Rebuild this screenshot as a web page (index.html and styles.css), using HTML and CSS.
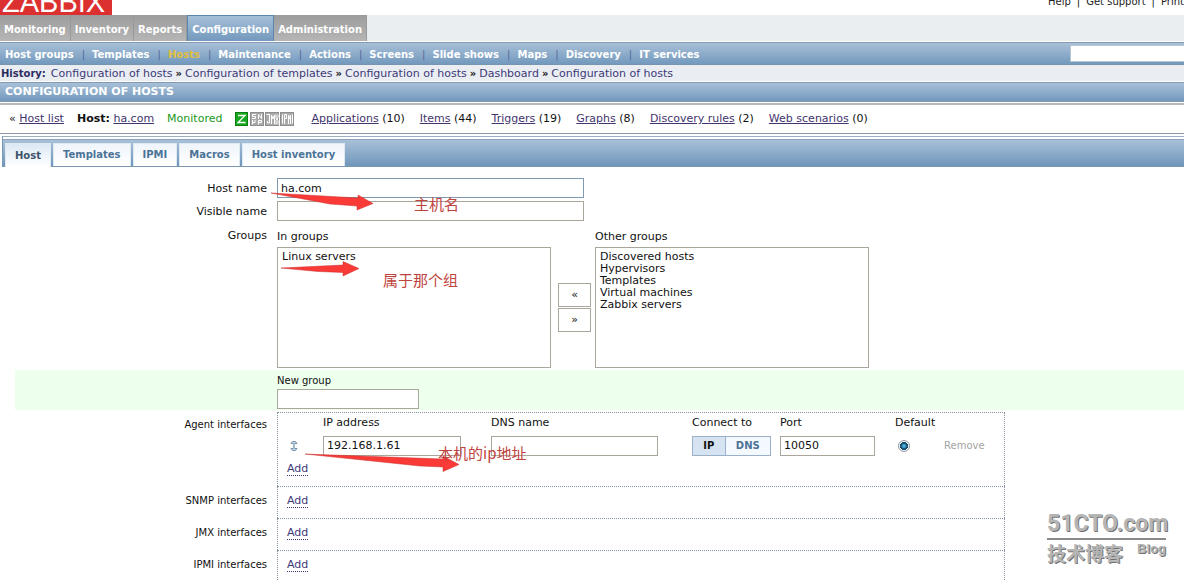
FILE: index.html
```html
<!DOCTYPE html>
<html lang="en">
<head>
<meta charset="utf-8">
<title>Configuration of hosts</title>
<link rel="stylesheet" href="styles.css">
</head>
<body>
<div class="page">
<header class="top">
  <div class="logo">ZABBIX</div>
  <nav class="help"><a href="#">Help</a><span>|</span><a href="#">Get support</a><span>|</span><a href="#">Print</a></nav>
</header>
<nav class="menu">
  <a href="#">Monitoring</a><a href="#">Inventory</a><a href="#">Reports</a><a href="#" class="active">Configuration</a><a href="#">Administration</a>
</nav>
<div class="submenu">
  <nav class="sublinks">
    <a href="#">Host groups</a><a href="#">Templates</a><a href="#" class="current">Hosts</a><a href="#">Maintenance</a><a href="#">Actions</a><a href="#">Screens</a><a href="#">Slide shows</a><a href="#">Maps</a><a href="#">Discovery</a><a href="#">IT services</a>
  </nav>
  <input class="search" type="text" aria-label="Search">
</div>
<nav class="history">
  <b>History:</b><a href="#">Configuration of hosts</a><i>»</i><a href="#">Configuration of templates</a><i>»</i><a href="#">Configuration of hosts</a><i>»</i><a href="#">Dashboard</a><i>»</i><a href="#">Configuration of hosts</a>
</nav>
<h1 class="title">CONFIGURATION OF HOSTS</h1>
<div class="hostbar">
  <span>« <a href="#">Host list</a></span>
  <span><b>Host:</b> <a href="#">ha.com</a></span>
  <span class="monitored">Monitored</span>
  <svg class="status" width="60" height="14" viewBox="0 0 60 14" aria-label="Availability">
    <rect x="0.5" y="0.5" width="12" height="13" fill="#17a81f" stroke="#0b7d12"/>
    <path d="M3 3.5h7L3 10.5h7.500" fill="none" stroke="#fff" stroke-width="1.300"/>
    <g fill="#aaa" stroke="#8e8e8e">
      <rect x="15.500" y="0.500" width="13" height="13"/><rect x="30.500" y="0.500" width="13" height="13"/><rect x="45.500" y="0.500" width="13" height="13"/>
    </g>
    <g fill="none" stroke="#fff">
      <path d="M21 2.500h-3.500v2h3v2H17M23.500 7V2.500L26.500 6.500V2M17.500 12.500V8M17.500 10.500H20V8M23.500 12.500V8.500h3v2h-3"/>
      <path d="M31.500 2.500h3V11h-2V9M36.500 12V3l1.500 4 1.500-4v9M41 2.500v3l2 3v4M43 2.500v3l-2 3v4"/>
      <path d="M47.500 2.500v9M49.500 12V2.500h2v4h-2M53.500 12V3l1 4 1-4v9M57.500 2.500v9"/>
    </g>
  </svg>
  <nav class="counts">
    <span><a href="#">Applications</a> (10)</span>
    <span><a href="#">Items</a> (44)</span>
    <span><a href="#">Triggers</a> (19)</span>
    <span><a href="#">Graphs</a> (8)</span>
    <span><a href="#">Discovery rules</a> (2)</span>
    <span><a href="#">Web scenarios</a> (0)</span>
  </nav>
</div>
<div class="tabs" role="tablist">
  <button class="tab selected" role="tab" aria-selected="true">Host</button>
  <button class="tab" role="tab">Templates</button>
  <button class="tab" role="tab">IPMI</button>
  <button class="tab" role="tab">Macros</button>
  <button class="tab" role="tab">Host inventory</button>
</div>
<form class="form">
  <div class="row"><label class="label" for="host">Host name</label><input id="host" class="wide focus" type="text" value="ha.com"></div>
  <div class="row"><label class="label" for="visible">Visible name</label><input id="visible" class="wide" type="text"></div>
  <div class="row groups">
    <span class="label">Groups</span>
    <div class="picker">
      <div class="list"><label for="in">In groups</label>
        <select id="in" multiple size="8"><option>Linux servers</option></select></div>
      <div class="move"><button type="button">«</button><button type="button">»</button></div>
      <div class="list"><label for="other">Other groups</label>
        <select id="other" multiple size="8"><option>Discovered hosts</option><option>Hypervisors</option><option>Templates</option><option>Virtual machines</option><option>Zabbix servers</option></select></div>
    </div>
  </div>
  <div class="row newgroup">
    <div class="list field"><label for="new">New group</label><input id="new" type="text"></div>
  </div>
  <div class="row iface">
    <span class="label">Agent interfaces</span>
    <div class="box agent">
      <table>
        <colgroup><col class="c-handle"><col class="c-ip"><col class="c-dns"><col class="c-conn"><col class="c-port"><col class="c-def"><col></colgroup>
        <thead><tr><th></th><th>IP address</th><th>DNS name</th><th>Connect to</th><th>Port</th><th>Default</th><th></th></tr></thead>
        <tbody><tr>
          <td class="handle"><svg width="8" height="10" viewBox="0 0 8 10"><path d="M1 2.500L2.500 0.500h3L7 2.500zM1 7.500L2.500 9.500h3L7 7.500z" fill="#c9dcea" stroke="#7893ab"/><path d="M4 2v6" stroke="#9db6ca" stroke-width="2"/></svg></td>
          <td><input class="ip" type="text" value="192.168.1.61" aria-label="IP address"></td>
          <td><input class="dns" type="text" aria-label="DNS name"></td>
          <td><div class="toggle"><button type="button" class="on">IP</button><button type="button">DNS</button></div></td>
          <td><input class="port" type="text" value="10050" aria-label="Port"></td>
          <td><input class="radio" type="radio" checked aria-label="Default"></td>
          <td class="remove">Remove</td>
        </tr></tbody>
      </table>
      <a href="#" class="add">Add</a>
    </div>
  </div>
  <div class="row iface"><span class="label">SNMP interfaces</span><div class="box"><a href="#" class="add">Add</a></div></div>
  <div class="row iface"><span class="label">JMX interfaces</span><div class="box"><a href="#" class="add">Add</a></div></div>
  <div class="row iface"><span class="label">IPMI interfaces</span><div class="box"><a href="#" class="add">Add</a></div></div>
</form>
<svg class="notes" width="560" height="480" viewBox="0 0 560 480">
  <g fill="#f93a37" stroke="#c9302c" stroke-width="0.500">
    <path d="M271 193L358 198V195L373 203.500L357 210V206L330 204Z"/>
    <path d="M281 268L343 265V261.500L359 268.500L343 276V272.500L318 271.500Z"/>
    <path d="M305 454L443 459V456L459 464.500L443 471.500V467L420 466Z"/>
  </g>
  <g class="note-text">
    <text x="414" y="210">主机名</text>
    <text x="383" y="286">属于那个组</text>
    <text x="438" y="459">本机的ip地址</text>
  </g>
</svg>
<div class="mark">
  <div class="mark-name">51CTO.com</div>
  <div class="mark-sub"><span class="mark-cn">技术博客</span><span class="mark-blog">Blog</span></div>
</div>
</div>
</body>
</html>
```
FILE: styles.css
```css
* { box-sizing: border-box; }
body {
  margin: 0;
  background: #fff;
  color: #111;
  font: 11px/14px "DejaVu Sans", "Noto Sans CJK SC", sans-serif;
}
.page { position: relative; height: 100vh; overflow: hidden; }
a { color: #3d3a78; text-decoration: none; }
input, button, select { font: inherit; color: inherit; margin: 0; border-radius: 0; }

.top { display: flex; justify-content: space-between; height: 15px; overflow: hidden; }
.logo {
  width: 112px;
  height: 15px;
  padding-left: 2px;
  display: flex;
  align-items: flex-end;
  background: #dc2f2f;
  color: #fff;
  font: 29px/26px "Liberation Sans", sans-serif;
}
.help { display: flex; gap: 6px; margin: -5px 0 0; white-space: nowrap; font-size: 10px; }
.help a { color: #222; }

.menu { display: flex; height: 27px; background: #eaeef1; border-bottom: 1px solid #fff; font-weight: bold; font-size: 10px; }
.menu a {
  display: flex;
  align-items: center;
  padding: 3px 4px 0;
  color: #fff;
  background: linear-gradient(#9c9c9c, #b6b6b6);
  border-right: 1px solid #999;
}
.menu a.active { padding-top: 2px; background: linear-gradient(#a5bfd8, #7399bd); border: 1px solid #5a86af; border-bottom: 0; }

.submenu {
  display: flex;
  justify-content: space-between;
  align-items: center;
  height: 23px;
  background: linear-gradient(#a8c0d8, #7399bd);
  border-top: 1px solid #829bb3;
  border-bottom: 1px solid #7795b0;
  font-weight: bold;
  font-size: 10px;
}
.sublinks { display: flex; padding: 2px 0 0 5px; }
.sublinks a { color: #fff; }
.sublinks a + a::before { content: "|"; margin: 0 7px 0 8px; color: #55679b; font-weight: normal; }
.sublinks .current { color: #e0bf3c; }
.search { width: 114px; height: 17px; border: 1px solid #b8c6d2; border-right: 0; background: #fff; }

.history { display: flex; align-items: center; height: 17px; padding: 2px 0 0 1px; background: #eaeef3; border-bottom: 1px solid #fff; }
.history b { margin-right: 5px; color: #2e2b62; font-size: 10px; }
.history i { margin: 0 3px; font-style: normal; font-weight: bold; font-size: 10px; }

.title {
  margin: 0;
  height: 20px;
  padding-left: 5px;
  background: linear-gradient(#a8c0d8, #7399bd);
  border: solid #829bb3;
  border-width: 1px 0;
  color: #fff;
  font-size: 11px;
  line-height: 18px;
}
.hostbar {
  display: flex;
  align-items: center;
  gap: 13px;
  margin-top: 1px;
  height: 31px;
  padding-left: 9px;
  border-top: 2px solid #b5b9bd;
  border-bottom: 1px solid #8a98a6;
  white-space: nowrap;
}
.hostbar a { text-decoration: underline; color: #43356e; }
.counts { display: flex; gap: 15px; margin-left: 3px; }
.monitored { color: #1a9a1a; }

.tabs {
  display: flex;
  align-items: flex-end;
  gap: 2px;
  margin: 2px 0 0 2px;
  height: 31px;
  padding: 0 0 1px 2px;
  background: linear-gradient(#9db0c2 0 1px, #fff 1px 3px, #8ba3ba 3px 4px, #a8c0d8 4px, #7096bb 30px, #7b98b3 30px);
  border-left: 1px solid #7b98b3;
}
.tab {
  height: 23px;
  padding: 0 9px;
  border: 1px solid #dfe9f2;
  border-bottom: 0;
  background: linear-gradient(#eff5fb, #fff);
  color: #4c7397;
  font-weight: bold;
  font-size: 10px;
}
.selected { height: 24px; margin-bottom: -1px; background: linear-gradient(#dce8f4, #fff); color: #3c536b; }

.form { padding: 11px 0 0 15px; }
.row { display: grid; grid-template-columns: 252px 1fr; column-gap: 10px; }
.label { text-align: right; }
.row > .label { padding-top: 4px; }
.form input[type="text"] {
  height: 20px;
  padding: 0 3px;
  border: 1px solid #aaa69c;
  background: #fff;
}
.wide { width: 307px; margin-bottom: 3px; }
.form input.focus { border-color: #8098b0; }
.groups { margin-top: 5px; }
.row.groups > .label { padding-top: 0; }
.picker { display: flex; align-items: flex-start; }
.list { display: flex; flex-direction: column; align-items: flex-start; }
.list label { line-height: 16px; padding-bottom: 2px; }
.list select {
  width: 274px;
  height: 121px;
  padding: 2px;
  border: 1px solid #aaa69c;
  background: #fff;
  overflow: hidden;
}
.list option { height: 12px; min-height: 12px; padding: 0 2px; line-height: 12px; }
.move { display: flex; flex-direction: column; gap: 1px; margin: 54px 4px 0 7px; }
.move button { width: 33px; height: 24px; padding: 0; border: 1px solid #aaa69c; background: #fff; }
.newgroup { margin-top: 2px; height: 40px; background: #edffed; }
.field { grid-column: 2; padding-top: 2px; }
.list.field label { line-height: 17px; padding: 0; font-size: 10px; }
.field input { width: 142px; }

.iface .box { width: 728px; height: 32px; padding: 7px 9px; border: 1px dotted #8593a1; border-bottom: 0; }
.newgroup + .iface { margin-top: 2px; }
.iface .agent { height: 74px; padding-top: 0; }
.row.iface > .label { padding-top: 8px; font-size: 10px; }
.newgroup + .row.iface > .label { padding-top: 6px; }
.add { display: inline-block; line-height: 13px; border-bottom: 1px dotted #3d3a78; }
.agent .add { margin-top: 3px; }
table { width: 100%; border-collapse: collapse; table-layout: fixed; }
th { font-weight: normal; text-align: left; padding: 0; height: 19px; }
td { padding: 0; height: 27px; }
.c-handle { width: 36px; }
.c-ip { width: 168px; }
.c-dns { width: 201px; }
.c-conn { width: 88px; }
.c-port { width: 115px; }
.c-def { width: 49px; }
.handle svg { display: block; margin-left: 3px; }
.ip { width: 138px; }
.dns { width: 167px; }
.port { width: 95px; }
.toggle { display: flex; width: 79px; }
.toggle button { flex: 1 1 auto; height: 20px; padding: 0; border: 1px solid #9ab0c8; background: #f4f9ff; color: #4c7397; font-weight: bold; font-size: 10px; }
.toggle .on { background: #d5e3f2; color: #111; }
.toggle button + button { border-left: 0; }
.radio {
  display: block;
  appearance: none;
  width: 12px;
  height: 12px;
  margin-left: 3px;
  border: 1px solid #8e959c;
  background: radial-gradient(circle, #4cb4dc 0 1px, #154a70 3px 4px, #fff 4px);
}
.form .radio { border-radius: 50%; }
.remove { color: #a3a3a3; font-size: 10px; }

.notes { position: absolute; left: 0; top: 0; pointer-events: none; }
.note-text { fill: #c0443e; font: 15px "Noto Sans CJK SC", sans-serif; }
.mark { position: absolute; right: 18px; bottom: 15px; width: 119px; color: #b5b5b5; font-weight: bold; text-shadow: 1px 1px 0 #747474; }
.mark-name { font: bold 23px/28px Roboto, "Liberation Sans", sans-serif; border-bottom: 2px solid #8a8a8a; }
.mark-sub { display: flex; justify-content: space-between; }
.mark-cn { font: bold 19px/26px "Noto Sans CJK SC", sans-serif; }
.mark-blog { font: bold 13px/18px "Liberation Sans", sans-serif; }
```
